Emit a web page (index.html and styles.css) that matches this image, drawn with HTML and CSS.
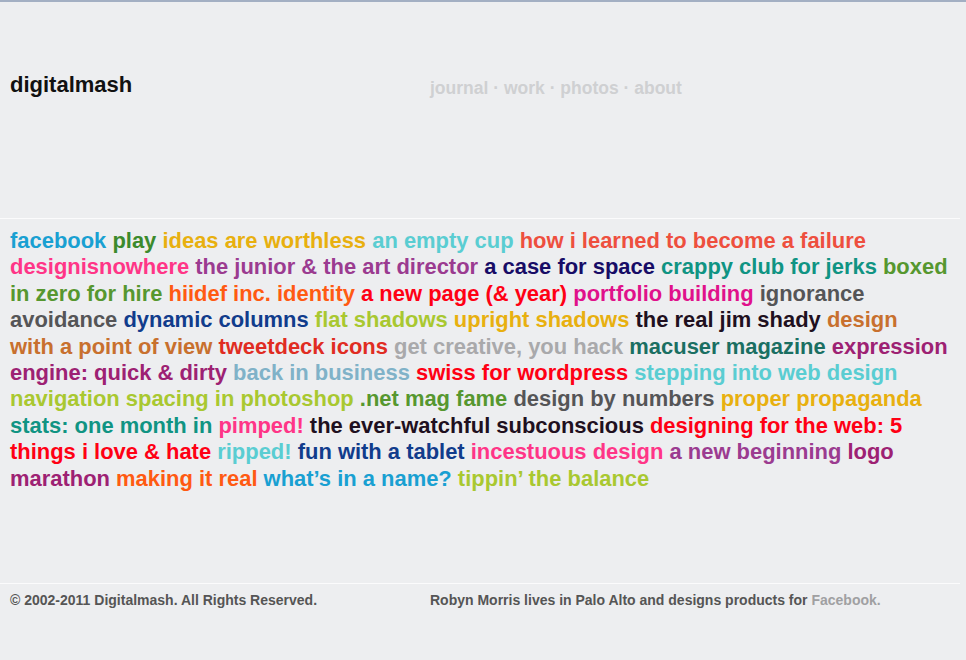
FILE: index.html
```html
<!DOCTYPE html>
<html lang="en">
<head>
<meta charset="utf-8">
<title>digitalmash</title>
<link rel="stylesheet" href="styles.css">
</head>
<body>
<div class="page">
  <header class="header">
    <h1 class="logo"><a href="#">digitalmash</a></h1>
    <nav class="nav">
      <a href="#">journal</a> · <a href="#">work</a> · <a href="#">photos</a> · <a href="#">about</a>
    </nav>
  </header>

  <main class="cloud">
    <a class="c-blue" href="#">facebook</a>
    <a class="c-green" href="#">play</a>
    <a class="c-gold" href="#">ideas are worthless</a>
    <a class="c-aqua" href="#">an empty cup</a>
    <a class="c-coral" href="#">how i learned to become a failure</a>
    <a class="c-pink" href="#">designisnowhere</a>
    <a class="c-purple" href="#">the junior &amp; the art director</a>
    <a class="c-navy" href="#">a case for space</a>
    <a class="c-teal" href="#">crappy club for jerks</a>
    <a class="c-grass" href="#">boxed in zero for hire</a>
    <a class="c-orange" href="#">hiidef inc. identity</a>
    <a class="c-red" href="#">a new page (&amp; year)</a>
    <a class="c-magenta" href="#">portfolio building</a>
    <a class="c-gray" href="#">ignorance avoidance</a>
    <a class="c-cobalt" href="#">dynamic columns</a>
    <a class="c-lime" href="#">flat shadows</a>
    <a class="c-gold" href="#">upright shadows</a>
    <a class="c-black" href="#">the real jim shady</a>
    <a class="c-rust" href="#">design<br>with a point of view</a>
    <a class="c-scarlet" href="#">tweetdeck icons</a>
    <a class="c-silver" href="#">get creative, you hack</a>
    <a class="c-pine" href="#">macuser magazine</a>
    <a class="c-plum" href="#">expression engine: quick &amp; dirty</a>
    <a class="c-sky" href="#">back in business</a>
    <a class="c-red" href="#">swiss for wordpress</a>
    <a class="c-aqua" href="#">stepping into web design</a>
    <a class="c-lime" href="#">navigation spacing in photoshop</a>
    <a class="c-grass" href="#">.net mag fame</a>
    <a class="c-gray" href="#">design by numbers</a>
    <a class="c-gold" href="#">proper propaganda</a>
    <a class="c-teal" href="#">stats: one month in</a>
    <a class="c-pink" href="#">pimped!</a>
    <a class="c-black" href="#">the ever-watchful subconscious</a>
    <a class="c-red" href="#">designing for the web: 5 things i love &amp; hate</a>
    <a class="c-aqua" href="#">ripped!</a>
    <a class="c-cobalt" href="#">fun with a tablet</a>
    <a class="c-pink" href="#">incestuous design</a>
    <a class="c-purple" href="#">a new beginning</a>
    <a class="c-plum" href="#">logo marathon</a>
    <a class="c-orange" href="#">making it real</a>
    <a class="c-blue" href="#">what’s in a name?</a>
    <a class="c-lime" href="#">tippin’ the balance</a>
  </main>

  <footer class="footer">
    <p class="copy">© 2002-2011 Digitalmash. All Rights Reserved.</p>
    <p class="bio">Robyn Morris lives in Palo Alto and designs products for <a href="#">Facebook.</a></p>
  </footer>
</div>
</body>
</html>
```
FILE: styles.css
```css
html, body {
  margin: 0;
  padding: 0;
}
body {
  background: #edeef0;
  border-top: 2px solid #a3afc3;
  font-family: "Liberation Sans", Arial, Helvetica, sans-serif;
  font-weight: bold;
  color: #555;
}
a {
  text-decoration: none;
}
.page {
  width: 960px;
}
.header {
  box-sizing: border-box;
  height: 217px;
  border-bottom: 1px solid #fbfbfc;
  padding: 70px 0 0 10px;
  display: grid;
  grid-template-columns: 420px 1fr;
  align-items: start;
}
.logo {
  margin: 0;
  font-size: 22px;
  line-height: 26px;
  letter-spacing: 0;
}
.logo a {
  color: #111;
}
.nav {
  margin-top: 3px;
  font-size: 17.5px;
  line-height: 26px;
  color: #cfd0d2;
}
.nav a {
  color: #cfd0d2;
}
.cloud {
  display: block;
  width: 940px;
  padding: 9px 10px 91px 10px;
  font-size: 21.95px;
  line-height: 26.4px;
}
.footer {
  border-top: 1px solid #fbfbfc;
  padding: 8px 0 0 10px;
  display: grid;
  grid-template-columns: 420px 1fr;
  font-size: 14px;
  line-height: 16px;
  color: #555;
}
.footer p {
  margin: 0;
}
.bio a {
  color: #a0a0a2;
}

.c-blue { color: #19a0d2; }
.c-green { color: #3b8a2c; }
.c-gold { color: #e8b00f; }
.c-aqua { color: #5acdd2; }
.c-coral { color: #ee4f3e; }
.c-pink { color: #ff3587; }
.c-purple { color: #9b3b90; }
.c-navy { color: #170c66; }
.c-teal { color: #109483; }
.c-grass { color: #56972f; }
.c-orange { color: #ff5a12; }
.c-red { color: #ff0014; }
.c-magenta { color: #e0118b; }
.c-gray { color: #555557; }
.c-cobalt { color: #113c8c; }
.c-lime { color: #a9c830; }
.c-black { color: #1f1020; }
.c-rust { color: #c8702e; }
.c-scarlet { color: #e02c22; }
.c-silver { color: #a9a9ab; }
.c-pine { color: #1a6f62; }
.c-plum { color: #9d2173; }
.c-sky { color: #80b2c8; }
```
